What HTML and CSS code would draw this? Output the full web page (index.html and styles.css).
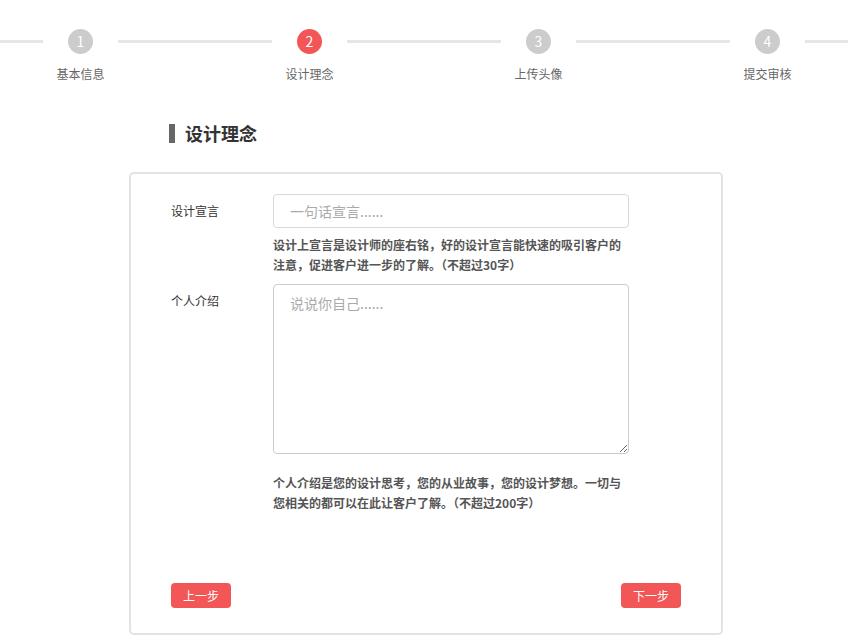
FILE: index.html
```html
<!DOCTYPE html>
<html lang="zh-CN">
<head>
  <meta charset="UTF-8" />
  <meta name="viewport" content="width=device-width, initial-scale=1.0" />
  <title>设计理念</title>
  <link rel="stylesheet" href="styles.css">
</head>
<body>
  <!-- progress -->
  <div class="steps">
    <div class="step">
      <div class="step-head"><span class="line"></span><span class="dot">1</span><span class="line"></span></div>
      <div class="step-name">基本信息</div>
    </div>
    <div class="step active">
      <div class="step-head"><span class="line"></span><span class="dot">2</span><span class="line"></span></div>
      <div class="step-name">设计理念</div>
    </div>
    <div class="step">
      <div class="step-head"><span class="line"></span><span class="dot">3</span><span class="line"></span></div>
      <div class="step-name">上传头像</div>
    </div>
    <div class="step">
      <div class="step-head"><span class="line"></span><span class="dot">4</span><span class="line"></span></div>
      <div class="step-name">提交审核</div>
    </div>
  </div>

  <div class="main">
    <h2 class="title">设计理念</h2>

    <form class="card">
      <div class="row">
        <label class="label" for="slogan">设计宣言</label>
        <div class="field">
          <input id="slogan" type="text" placeholder="一句话宣言......">
          <p class="tip">设计上宣言是设计师的座右铭，好的设计宣言能快速的吸引客户的注意，促进客户进一步的了解。（不超过30字）</p>
        </div>
      </div>
      <div class="row">
        <label class="label" for="intro">个人介绍</label>
        <div class="field">
          <textarea id="intro" placeholder="说说你自己......"></textarea>
          <p class="tip tip-lower">个人介绍是您的设计思考，您的从业故事，您的设计梦想。一切与您相关的都可以在此让客户了解。（不超过200字）</p>
        </div>
      </div>
      <div class="actions">
        <button type="button" class="btn">上一步</button>
        <button type="button" class="btn">下一步</button>
      </div>
    </form>
  </div>
</body>
</html>
```

FILE: styles.css
```css
body {
  margin: 0;
  font-family: "Noto Sans CJK SC", "Noto Sans", sans-serif;
  background-color: #fff;
  overflow-x: hidden;
}

/* progress bar */
.steps {
  display: flex;
  justify-content: center;
  padding-top: 29px;
}
.step {
  flex: 0 0 229px;
}
.step-head {
  display: flex;
  align-items: center;
}
.line {
  flex: 1;
  height: 3px;
  background-color: #e6e6e6;
}
.dot {
  width: 25px;
  height: 25px;
  margin: 0 25px;
  border-radius: 50%;
  background-color: #ccc;
  color: #fff;
  font-size: 14px;
  line-height: 25px;
  text-align: center;
}
.step.active .dot {
  background-color: #f25656;
}
.step-name {
  margin-top: 10px;
  font-size: 12px;
  line-height: 20px;
  color: #666;
  text-align: center;
}

/* content */
.main {
  width: 594px;
  margin: 0 auto;
  padding-left: 4px;
}
.title {
  margin: 40px 0 29px 40px;
  padding-left: 10px;
  border-left: 6px solid #666;
  font-size: 18px;
  line-height: 19px;
  color: #333;
}
.card {
  border: 2px solid #e6e3df;
  border-radius: 5px;
  padding: 20px 40px 25px;
}
.row {
  display: flex;
}
.label {
  width: 102px;
  font-size: 12px;
  line-height: 34px;
  color: #333;
}
.field {
  width: 356px;
}
input,
textarea {
  display: block;
  width: 100%;
  box-sizing: border-box;
  border: 1px solid #d9d9d9;
  border-radius: 4px;
  font-family: inherit;
  font-size: 14px;
  color: #333;
}
input {
  height: 34px;
  padding: 0 16px;
}
textarea {
  height: 170px;
  padding: 8px 16px;
  line-height: 20px;
  resize: vertical;
  border-color: #ccc;
}
input::placeholder,
textarea::placeholder {
  color: #aaa;
}
.tip {
  margin: 7px 0 9px;
  font-size: 12px;
  font-weight: bold;
  line-height: 20px;
  color: #555;
}
.tip-lower {
  margin-top: 19px;
}
.actions {
  display: flex;
  justify-content: space-between;
  margin-top: 61px;
}
.btn {
  width: 60px;
  height: 25px;
  padding: 0;
  border: none;
  border-radius: 4px;
  background-color: #f25656;
  color: #fff;
  font-family: inherit;
  font-size: 12px;
  cursor: pointer;
}
```
